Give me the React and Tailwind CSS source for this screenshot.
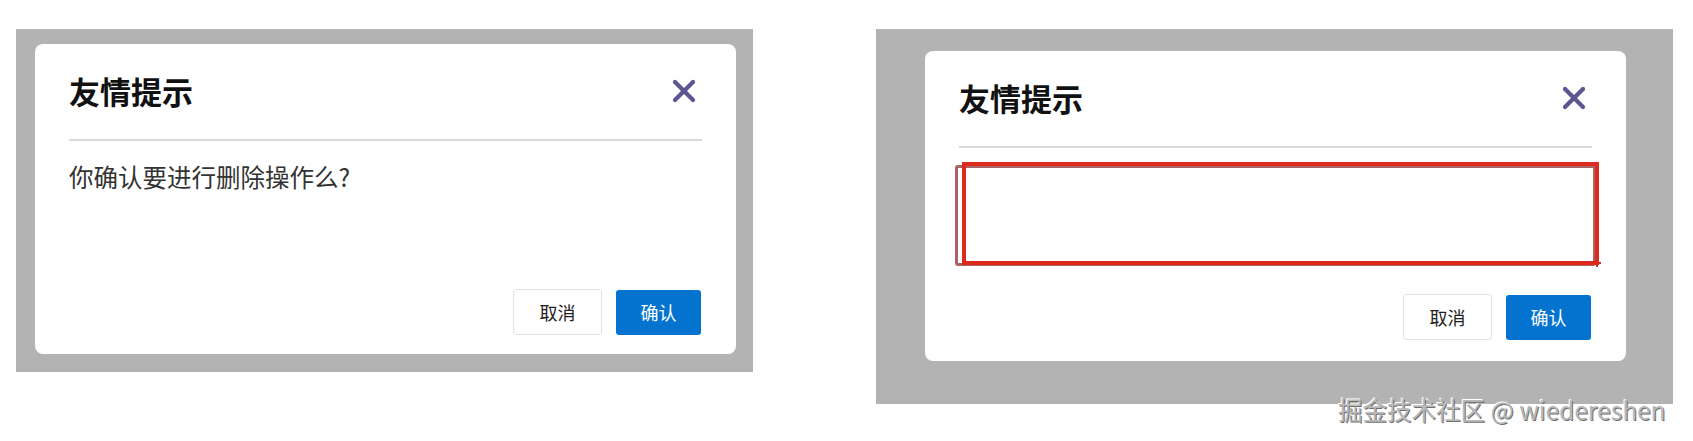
const FONT = { fontFamily: '"Noto Sans CJK SC", "Noto Sans", sans-serif' };

function CloseIcon() {
  return (
    <svg viewBox="0 0 24 24" width="24" height="24" fill="none" stroke="#5b5692" strokeWidth="4.2" strokeLinecap="round">
      <line x1="3" y1="3" x2="21" y2="21" />
      <line x1="21" y1="3" x2="3" y2="21" />
    </svg>
  );
}

function Dialog({ children, footerPad = 'pb-[19px]' }) {
  return (
    <div className="w-[701px] h-[310px] bg-white rounded-[8px] flex flex-col px-[34px]">
      {/* header */}
      <div className="flex items-center justify-between pt-[28px] pb-[29px]">
        <h2 className="text-[31px] leading-[38px] font-bold text-[#111]">友情提示</h2>
        <button type="button" className="mr-[6px] mt-[-1px]" aria-label="关闭">
          <CloseIcon />
        </button>
      </div>
      <div className="h-[2px] bg-[#dadada]" />

      {/* body */}
      <div className="flex-1">{children}</div>

      {/* footer */}
      <div className={`flex justify-end gap-[14px] ${footerPad} pr-[1px]`}>
        <button
          type="button"
          className="w-[89px] h-[46px] rounded-[3px] border border-[#e3e3e3] bg-white text-[18px] text-[#222]"
        >
          取消
        </button>
        <button
          type="button"
          className="w-[85px] h-[45px] mt-[1px] rounded-[3px] bg-[#0473d0] text-[18px] text-white"
        >
          确认
        </button>
      </div>
    </div>
  );
}

export default function App() {
  return (
    <div className="relative w-[1693px] h-[441px] bg-white overflow-hidden" style={FONT}>
      <div className="flex items-start pt-[29px] pl-[16px] gap-[123px]">
        {/* left screenshot */}
        <div className="w-[737px] h-[343px] bg-[#b3b3b3] pl-[19px] pt-[15px]">
          <Dialog>
            <p className="mt-[20px] text-[24.5px] leading-[32px] text-[#333]">你确认要进行删除操作么?</p>
          </Dialog>
        </div>

        {/* right screenshot */}
        <div className="w-[797px] h-[375px] bg-[#b3b3b3] pl-[49px] pt-[22px]">
          <Dialog footerPad="pb-[21px]">
            <div className="relative mt-[17px] -ml-[4px]">
              <div className="w-[641px] h-[101px] rounded-[3px] border-[3px] border-[#a86464]" />
              {/* red highlight annotation */}
              <div className="absolute -top-[3px] left-[7px] w-[637px] h-[103px] border-[4px] border-[#dd2a1c]" />
              <div className="absolute top-[97px] left-[641px] w-[5px] h-[2px] bg-[#dd2a1c]" />
              <div className="absolute top-[96px] left-[641px] w-[2px] h-[6px] bg-[#dd2a1c]" />
            </div>
          </Dialog>
        </div>
      </div>

      {/* watermark */}
      <div className="absolute left-[1338px] top-[395px] text-[24.5px] leading-[30px] text-[#b9b9b9] whitespace-nowrap [text-shadow:1px_1px_0_#6f6f6f,-1px_-1px_0_#ffffff]">
        掘金技术社区 @ wiedereshen
      </div>
    </div>
  );
}
